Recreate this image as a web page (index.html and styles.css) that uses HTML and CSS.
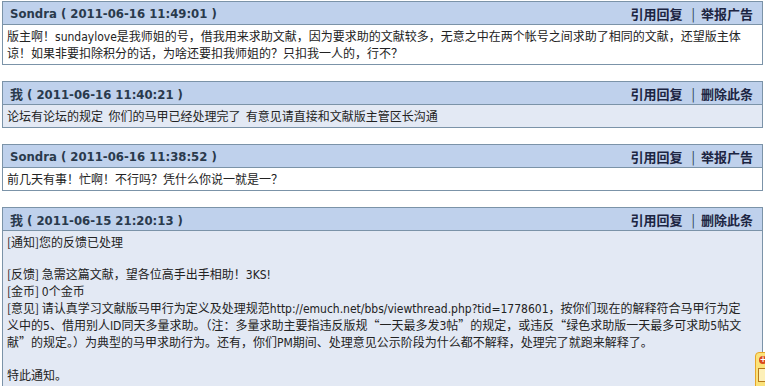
FILE: index.html
```html
<!DOCTYPE html>
<html lang="zh-CN">
<head>
    <meta charset="UTF-8">
    <title>短消息</title>
    <link rel="stylesheet" href="styles.css">
</head>
<body>

    <!-- 消息 1 -->
    <div class="post">
        <div class="post-head">
            <span class="author">Sondra ( 2011-06-16 11:49:01 )</span>
            <span class="actions"><a href="#">引用回复</a><i>|</i><a href="#">举报广告</a></span>
        </div>
        <div class="post-body">
            版主啊！<span class="en">sundaylove</span>是我师姐的号，借我用来求助文献，因为要求助的文献较多，无意之中在两个帐号之间求助了相同的文献，还望版主体谅！如果非要扣除积分的话，为啥还要扣我师姐的？只扣我一人的，行不？
        </div>
    </div>

    <!-- 消息 2 -->
    <div class="post alt">
        <div class="post-head">
            <span class="author">我 ( 2011-06-16 11:40:21 )</span>
            <span class="actions"><a href="#">引用回复</a><i>|</i><a href="#">删除此条</a></span>
        </div>
        <div class="post-body">
            论坛有论坛的规定&nbsp; 你们的马甲已经处理完了&nbsp; 有意见请直接和文献版主管区长沟通
        </div>
    </div>

    <!-- 消息 3 -->
    <div class="post">
        <div class="post-head">
            <span class="author">Sondra ( 2011-06-16 11:38:52 )</span>
            <span class="actions"><a href="#">引用回复</a><i>|</i><a href="#">举报广告</a></span>
        </div>
        <div class="post-body">
            前几天有事！忙啊！不行吗？凭什么你说一就是一？
        </div>
    </div>

    <!-- 消息 4 -->
    <div class="post alt">
        <div class="post-head">
            <span class="author">我 ( 2011-06-15 21:20:13 )</span>
            <span class="actions"><a href="#">引用回复</a><i>|</i><a href="#">删除此条</a></span>
        </div>
        <div class="post-body">
            [通知]您的反馈已处理<br>
            <br>
            [反馈] 急需这篇文献，望各位高手出手相助！<span class="en">3KS!</span><br>
            [金币] <span class="en">0</span>个金币<br>
            [意见] 请认真学习文献版马甲行为定义及处理规范<span class="en">http://emuch.net/bbs/viewthread.php?tid=1778601</span>，按你们现在的解释符合马甲行为定义中的<span class="en">5</span>、借用别人<span class="en">ID</span>同天多量求助。（注：多量求助主要指违反版规“一天最多发<span class="en">3</span>帖”的规定，或违反“绿色求助版一天最多可求助<span class="en">5</span>帖文献”的规定。）为典型的马甲求助行为。还有，你们<span class="en">PM</span>期间、处理意见公示阶段为什么都不解释，处理完了就跑来解释了。<br>
            <br>
            特此通知。<br>
            <br>
            <br>
        </div>
    </div>

    <!-- 右下角浮动按钮 -->
    <div class="float-tool">
        <span class="plus">+</span>
        <span class="box"></span>
    </div>

</body>
</html>
```

FILE: styles.css
```css
html {
    overflow-x: hidden;
}

body {
    margin: 0;
    padding: 1px 2px;
    font-family: "Noto Sans CJK SC", sans-serif;
    font-size: 12px;
    color: #222;
    background-color: #fff;
}

.en {
    font-family: "DejaVu Sans Condensed", "DejaVu Sans", sans-serif;
    font-size: 12px;
}

.post {
    border: 1px solid #7b93a8;
    margin-bottom: 16px;
}

.post-head {
    display: flex;
    justify-content: space-between;
    align-items: center;
    height: 22px;
    padding: 0 9px 0 7px;
    background-color: #bfd1ec;
    border-bottom: 1px solid #7b93a8;
    font-weight: bold;
}

.author {
    font-family: "DejaVu Sans Condensed", "DejaVu Sans", "Noto Sans CJK SC", sans-serif;
    font-size: 13px;
    color: #2a3a4c;
}

.actions {
    font-size: 13px;
}

.actions a {
    color: #1c2542;
    text-decoration: none;
}

.actions i {
    font-style: normal;
    font-weight: normal;
    color: #2a3a4c;
    margin: 0 6px 0 9px;
}

.post-body {
    padding: 3px 18px 3px 4px;
    line-height: 16px;
}

.post.alt .post-body {
    background-color: #e3e9f4;
}

.float-tool {
    position: absolute;
    top: 352px;
    left: 755px;
    width: 30px;
    height: 48px;
    background-color: #fbe27a;
    border: 1px solid #e8a628;
    border-radius: 4px;
}

.float-tool .plus {
    position: absolute;
    top: 3px;
    left: 3px;
    width: 8px;
    height: 8px;
    border-radius: 50%;
    background-color: #d94a1e;
    color: #fff;
    font: bold 8px/8px "DejaVu Sans", sans-serif;
    text-align: center;
}

.float-tool .box {
    position: absolute;
    top: 15px;
    left: 2px;
    width: 12px;
    height: 12px;
    border: 1px solid #b77a1c;
    background-color: #fdf0b8;
}
```
